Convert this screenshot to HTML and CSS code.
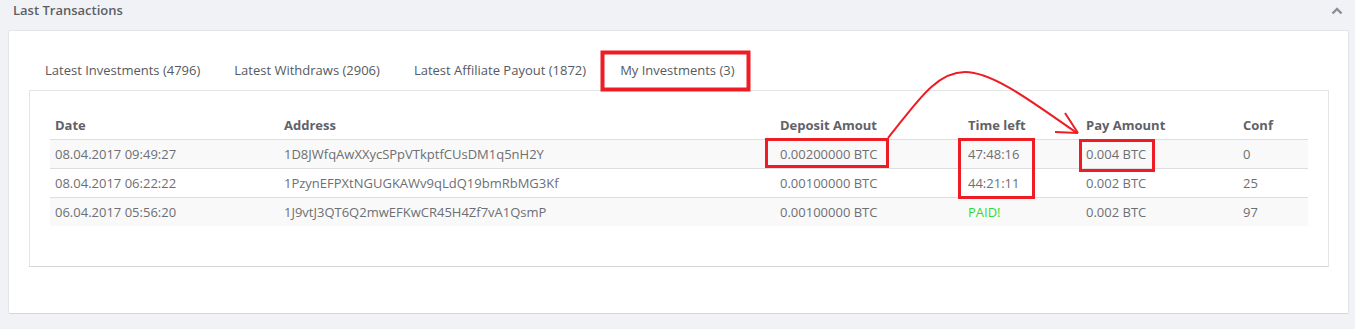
FILE: index.html
```html
<!DOCTYPE html>
<html lang="en">
<head>
  <meta charset="UTF-8">
  <meta name="viewport" content="width=device-width, initial-scale=1.0">
  <title>Last Transactions</title>
  <link rel="stylesheet" href="styles.css">
</head>
<body>
  <div class="box-head">
    <h3 class="box-title">Last Transactions</h3>
    <span class="collapse-icon">
      <svg width="12" height="8" viewBox="0 0 12 8"><path d="M1.5 6.5 L6 2 L10.5 6.5" fill="none" stroke="#8a8f96" stroke-width="2.4"/></svg>
    </span>
  </div>
  <div class="box-body">
    <ul class="nav-tabs">
      <li><a href="#">Latest Investments (4796)</a></li>
      <li><a href="#">Latest Withdraws (2906)</a></li>
      <li><a href="#">Latest Affiliate Payout (1872)</a></li>
      <li class="active"><a href="#">My Investments (3)</a></li>
    </ul>
    <div class="tab-content">
      <table class="tx-table">
        <thead>
          <tr>
            <th class="c-date">Date</th>
            <th class="c-addr">Address</th>
            <th class="c-dep">Deposit Amout</th>
            <th class="c-time">Time left</th>
            <th class="c-pay">Pay Amount</th>
            <th class="c-conf">Conf</th>
          </tr>
        </thead>
        <tbody>
          <tr>
            <td>08.04.2017 09:49:27</td>
            <td>1D8JWfqAwXXycSPpVTkptfCUsDM1q5nH2Y</td>
            <td>0.00200000 BTC</td>
            <td>47:48:16</td>
            <td>0.004 BTC</td>
            <td>0</td>
          </tr>
          <tr>
            <td>08.04.2017 06:22:22</td>
            <td>1PzynEFPXtNGUGKAWv9qLdQ19bmRbMG3Kf</td>
            <td>0.00100000 BTC</td>
            <td>44:21:11</td>
            <td>0.002 BTC</td>
            <td>25</td>
          </tr>
          <tr>
            <td>06.04.2017 05:56:20</td>
            <td>1J9vtJ3QT6Q2mwEFKwCR45H4Zf7vA1QsmP</td>
            <td>0.00100000 BTC</td>
            <td><span class="paid">PAID!</span></td>
            <td>0.002 BTC</td>
            <td>97</td>
          </tr>
        </tbody>
      </table>
    </div>
  </div>

  <!-- hand-drawn annotations on top of the screenshot -->
  <svg class="marks" width="1355" height="329" viewBox="0 0 1355 329">
    <g fill="none" stroke="#ee1c25" stroke-width="3">
      <rect x="602.5" y="52.5" width="146" height="37" stroke-width="4"/>
      <rect x="766.5" y="139.5" width="121" height="27"/>
      <rect x="959.5" y="139.5" width="74" height="58"/>
      <rect x="1080.5" y="140.5" width="73" height="30"/>
      <path d="M888 138 C 915 105, 935 72, 965 72 C 995 72, 1040 108, 1077 133" stroke-width="2"/>
      <path d="M1055 132 L1078 133 M1065 113 L1078 133" stroke-width="2"/>
    </g>
  </svg>
</body>
</html>
```

FILE: styles.css
```css
* {
  margin: 0;
  padding: 0;
  box-sizing: border-box;
}

body {
  font-family: 'Open Sans', sans-serif;
  font-size: 13px;
  background-color: #f1f2f6;
  color: #6b6b6b;
  padding: 0 6px 0 8px;
  position: relative;
}

.box-head {
  display: flex;
  justify-content: space-between;
  align-items: center;
  height: 30px;
  padding: 0 6px 10px 5px;
}

.box-title {
  font-size: 13px;
  font-weight: 600;
  color: #5c5f66;
}

.collapse-icon {
  display: flex;
  margin-top: 2px;
}

.box-body {
  background: #fff;
  border: 1px solid #e3e4e8;
  border-bottom-color: #d6d7db;
  border-radius: 2px;
  padding: 21px 19px 46px 20px;
}

.nav-tabs {
  list-style: none;
  display: flex;
  height: 38px;
  padding-left: 1px;
}

.nav-tabs li a {
  display: block;
  padding: 9px 15px 11px 15px;
  margin-right: 4px;
  line-height: 18px;
  color: #555a62;
  text-decoration: none;
}

.tab-content {
  border: 1px solid #e5e5e5;
  border-bottom-color: #d8d8d8;
  padding: 20px 20px 40px 20px;
}

.tx-table {
  width: 100%;
  border-collapse: collapse;
}

.tx-table th {
  text-align: left;
  font-weight: 700;
  color: #5f6268;
  padding: 5px;
  line-height: 18px;
  border-bottom: 1px solid #dedede;
}

.tx-table td {
  padding: 5px;
  line-height: 18px;
  border-top: 1px solid #dedede;
  color: #6d6f73;
}

.tx-table tbody tr:nth-child(odd) {
  background: #f9f9f9;
}

.c-date { width: 229px; }
.c-addr { width: 496px; }
.c-dep { width: 188px; }
.c-time { width: 118px; }
.c-pay { width: 157px; }

.paid {
  color: #34d934;
}

.marks {
  position: absolute;
  top: 0;
  left: 0;
  pointer-events: none;
}
```
